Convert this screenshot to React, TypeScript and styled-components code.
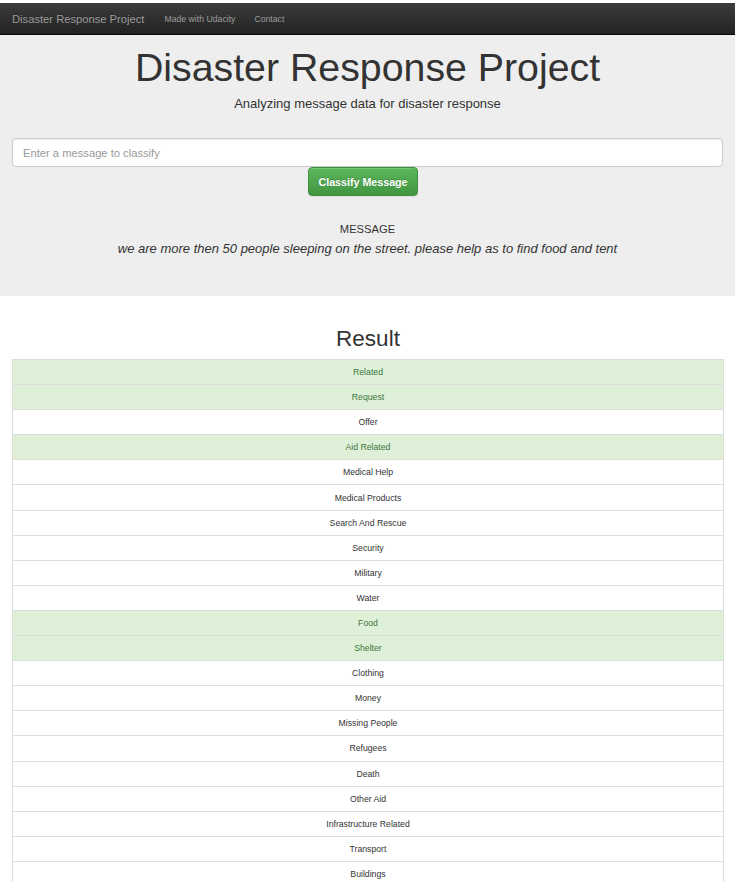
import React from "react";
import styled, { createGlobalStyle } from "styled-components";

const Global = createGlobalStyle`
  html, body { margin: 0; padding: 0; background: #fff; }
  body {
    font-family: "Liberation Sans", Arial, Helvetica, sans-serif;
    color: #333;
    padding-top: 3px;
  }
  * { box-sizing: border-box; }
`;

const Navbar = styled.nav`
  height: 32px;
  background: linear-gradient(to bottom, #3c3c3c 0%, #222 100%);
  border-bottom: 1px solid #080808;
  display: flex;
  align-items: center;
  padding: 0 12px;
`;

const Brand = styled.a`
  color: #9d9d9d;
  font-size: 11.2px;
  text-shadow: 0 -1px 0 rgba(0, 0, 0, 0.25);
  margin-right: 20px;
`;

const NavLink = styled.a`
  color: #9d9d9d;
  font-size: 8.7px;
  margin-right: 19px;
`;

const Jumbotron = styled.header`
  background: #eee;
  padding: 6px 12px 0;
  height: 261px;
  text-align: center;
`;

const Title = styled.h1`
  margin: 0;
  font-size: 39.3px;
  font-weight: 400;
  line-height: 52px;
  color: #333;
`;

const Subtitle = styled.p`
  margin: 2px 0 0;
  font-size: 13px;
  line-height: 18px;
  color: #333;
`;

const Form = styled.form`
  margin-top: 25px;
  display: flex;
  flex-direction: column;
  align-items: center;
`;

const Input = styled.input`
  width: 100%;
  height: 29px;
  border: 1px solid #ccc;
  border-radius: 4px;
  background: #fff;
  padding: 0 10px;
  font-family: "Liberation Sans", Arial, sans-serif;
  font-size: 11.2px;
  color: #555;
  box-shadow: inset 0 1px 1px rgba(0, 0, 0, 0.075);
  &::placeholder { color: #999; }
`;

const Button = styled.button`
  width: 110px;
  height: 29px;
  margin: 0 9px 0 0;
  border: 1px solid #3e8f3e;
  border-radius: 4px;
  background: linear-gradient(to bottom, #5cb85c 0%, #419641 100%);
  color: #fff;
  font-family: "Liberation Sans", Arial, sans-serif;
  font-weight: 700;
  font-size: 10.7px;
  text-shadow: 0 -1px 0 rgba(0, 0, 0, 0.2);
  box-shadow: inset 0 1px 0 rgba(255, 255, 255, 0.15), 0 1px 1px rgba(0, 0, 0, 0.075);
  padding: 0;
`;

const MessageLabel = styled.h4`
  margin: 26px 0 0;
  font-size: 11.2px;
  font-weight: 400;
  line-height: 14px;
  color: #333;
`;

const MessageText = styled.p`
  margin: 4px 0 0;
  font-size: 13px;
  font-style: italic;
  line-height: 17px;
  color: #333;
`;

const Container = styled.main`
  padding: 0 11px 0 12px;
`;

const ResultTitle = styled.h2`
  margin: 25px 0 0;
  font-size: 22.5px;
  font-weight: 400;
  line-height: 36px;
  text-align: center;
  color: #333;
`;

const List = styled.div`
  display: flex;
  flex-direction: column;
  margin-top: 2px;
`;

const Row = styled.div<{ $on: boolean }>`
  height: 26.1px;
  flex: none;
  border: 1px solid #ddd;
  margin-top: -1px;
  &:first-child { margin-top: 0; }
  background: ${(p) => (p.$on ? "#dff0d8" : "#fff")};
  color: ${(p) => (p.$on ? "#3c763d" : "#333")};
  font-size: 8.7px;
  display: flex;
  align-items: center;
  justify-content: center;
`;

const categories: [string, boolean][] = [
  ["Related", true],
  ["Request", true],
  ["Offer", false],
  ["Aid Related", true],
  ["Medical Help", false],
  ["Medical Products", false],
  ["Search And Rescue", false],
  ["Security", false],
  ["Military", false],
  ["Water", false],
  ["Food", true],
  ["Shelter", true],
  ["Clothing", false],
  ["Money", false],
  ["Missing People", false],
  ["Refugees", false],
  ["Death", false],
  ["Other Aid", false],
  ["Infrastructure Related", false],
  ["Transport", false],
  ["Buildings", false],
  ["Electricity", false],
];

export default function App() {
  return (
    <>
      <Global />
      <Navbar>
        <Brand>Disaster Response Project</Brand>
        <NavLink>Made with Udacity</NavLink>
        <NavLink>Contact</NavLink>
      </Navbar>
      <Jumbotron>
        <Title>Disaster Response Project</Title>
        <Subtitle>Analyzing message data for disaster response</Subtitle>
        <Form onSubmit={(e) => e.preventDefault()}>
          <Input placeholder="Enter a message to classify" />
          <Button type="submit">Classify Message</Button>
        </Form>
        <MessageLabel>MESSAGE</MessageLabel>
        <MessageText>
          we are more then 50 people sleeping on the street. please help as to find food and tent
        </MessageText>
      </Jumbotron>
      <Container>
        <ResultTitle>Result</ResultTitle>
        <List>
          {categories.map(([name, on]) => (
            <Row key={name} $on={on}>
              {name}
            </Row>
          ))}
        </List>
      </Container>
    </>
  );
}
